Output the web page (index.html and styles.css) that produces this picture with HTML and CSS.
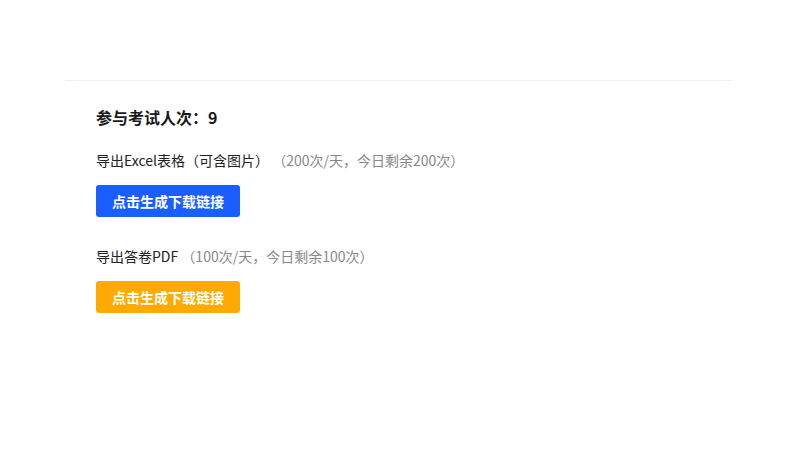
FILE: index.html
```html
<!DOCTYPE html>
<html>
<head>
<meta charset="utf-8">
<link rel="stylesheet" href="styles.css">
</head>
<body>
<div class="panel">
  <div class="content">
    <div class="title">参与考试人次：9</div>
    <div class="item">
      <div class="label">导出Excel表格（可含图片） <span class="hint">（200次/天，今日剩余200次）</span></div>
      <button class="btn blue">点击生成下载链接</button>
    </div>
    <div class="item">
      <div class="label">导出答卷PDF <span class="hint">（100次/天，今日剩余100次）</span></div>
      <button class="btn orange">点击生成下载链接</button>
    </div>
  </div>
</div>
</body>
</html>
```
FILE: styles.css
```css
html, body {
  margin: 0;
  padding: 0;
  background: #fff;
  font-family: "Noto Sans CJK SC", "Noto Sans", sans-serif;
  color: #222;
}
.panel {
  margin: 80px 0 0 65px;
  width: 668px;
  border-top: 1px solid #eeeff6;
}
.content {
  padding: 24px 31px;
}
.title {
  font-size: 16px;
  font-weight: bold;
  line-height: 24px;
  color: #1a1a1a;
}
.item {
  margin-top: 21px;
}
.item + .item {
  margin-top: 29px;
}
.label {
  font-size: 14px;
  line-height: 20px;
  color: #222;
}
.hint {
  color: #888;
}
.btn {
  display: block;
  margin-top: 15px;
  width: 144px;
  height: 32px;
  border: none;
  border-radius: 3px;
  color: #fff;
  font-family: "Noto Sans CJK SC", sans-serif;
  font-size: 14px;
  font-weight: bold;
  padding: 0;
}
.blue { background: #1a5eff; }
.orange { background: #ffaa00; }
```
